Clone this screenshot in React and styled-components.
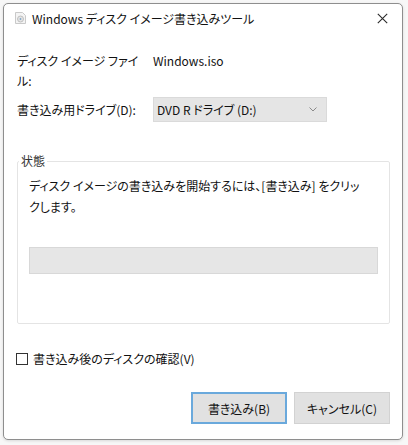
import React from "react";
import styled, { createGlobalStyle } from "styled-components";

const GlobalStyle = createGlobalStyle`
  html, body {
    margin: 0;
    padding: 0;
    background: #f7f7f7;
  }
  body {
    font-family: "Noto Sans CJK JP", "Noto Sans", sans-serif;
    font-size: 12px;
    color: #111;
    font-feature-settings: "palt";
  }
`;

const Screen = styled.div`
  width: 408px;
  height: 445px;
  box-sizing: border-box;
  padding: 3px 0 0 3px;
`;

const Window = styled.div`
  width: 400px;
  height: 437px;
  box-sizing: border-box;
  border: 1px solid #8e8e8e;
  border-radius: 5px;
  background: #fff;
  box-shadow: 0 1px 3px rgba(0, 0, 0, 0.12);
  display: flex;
  flex-direction: column;
`;

const TitleBar = styled.div`
  height: 28px;
  display: flex;
  align-items: center;
  padding: 0 12px 0 10px;
`;

const TitleText = styled.div`
  flex: 1;
  margin-left: 5px;
  font-size: 12px;
  color: #111;
`;

const CloseButton = styled.div`
  width: 14px;
  height: 14px;
  display: flex;
  align-items: center;
  justify-content: center;
  margin-right: 1px;
`;

const Content = styled.div`
  flex: 1;
  display: flex;
  flex-direction: column;
  padding: 0 12px 0 13px;
`;

const FieldRow = styled.div`
  display: flex;
  align-items: ${(p) => (p.$center ? "center" : "flex-start")};
  margin-top: ${(p) => p.$top}px;
  line-height: 20px;
`;

const Label = styled.div`
  width: 136px;
  flex-shrink: 0;
  span {
    display: block;
    max-width: ${(p) => p.$wrap || 136}px;
  }
`;

const Value = styled.div``;

const Select = styled.div`
  width: 174px;
  height: 25px;
  box-sizing: border-box;
  background: #e5e5e5;
  border: 1px solid #dadada;
  display: flex;
  align-items: center;
  justify-content: space-between;
  padding: 0 9px 0 3px;
`;

const Group = styled.fieldset`
  margin: 31px 0 0 0;
  padding: 7px 11px 0 11px;
  height: 171px;
  box-sizing: border-box;
  border: 1px solid #e4e4e4;
  border-radius: 2px;
  min-width: 0;
`;

const Legend = styled.legend`
  padding: 0 2px;
  margin-left: -10px;
  line-height: 16px;
  color: #333;
`;

const StatusText = styled.p`
  margin: 0;
  max-width: 334px;
  line-height: 20.5px;
`;

const Progress = styled.div`
  margin-top: 30px;
  height: 27px;
  box-sizing: border-box;
  background: #e6e6e6;
  border: 1px solid #d8d8d8;
`;

const CheckRow = styled.label`
  display: flex;
  align-items: center;
  margin-top: 25px;
  line-height: 20px;
  gap: 5px;
`;

const CheckBox = styled.span`
  width: 12px;
  height: 12px;
  box-sizing: border-box;
  border: 1px solid #333;
  background: #fff;
  margin-left: -1px;
`;

const ButtonBar = styled.div`
  display: flex;
  justify-content: flex-end;
  gap: 7px;
  margin-top: 23px;
`;

const Button = styled.button`
  width: 96px;
  height: 32px;
  box-sizing: border-box;
  background: #e1e1e1;
  border: ${(p) => (p.$default ? "2px solid #6aa9dc" : "1px solid #d2d2d2")};
  font: inherit;
  font-size: 12px;
  color: #111;
  padding: 0;
`;

const AppIcon = () => (
  <svg width="13" height="14" viewBox="0 0 13 14">
    <path d="M1.5 1.5h7l3 3v8h-10z" fill="#f4f4f4" stroke="#c9c9c9" />
    <circle cx="6.5" cy="8" r="3" fill="#e4e4e4" stroke="#b5b5b5" strokeWidth="0.8" />
    <circle cx="6.5" cy="8" r="0.9" fill="#7fa7c9" />
  </svg>
);

const CloseIcon = () => (
  <svg width="11" height="11" viewBox="0 0 11 11">
    <path d="M0.8 0.8l9.4 9.4M10.2 0.8l-9.4 9.4" stroke="#2a2a2a" strokeWidth="1.1" />
  </svg>
);

const Chevron = () => (
  <svg width="8" height="5" viewBox="0 0 8 5">
    <path d="M0.5 0.5l3.5 3.5 3.5-3.5" fill="none" stroke="#8a8a8a" strokeWidth="1" />
  </svg>
);

export default function App() {
  return (
    <>
      <GlobalStyle />
      <Screen>
        <Window>
          <TitleBar>
            <AppIcon />
            <TitleText>Windows ディスク イメージ書き込みツール</TitleText>
            <CloseButton>
              <CloseIcon />
            </CloseButton>
          </TitleBar>
          <Content>
            <FieldRow $top={19}>
              <Label $wrap={124}>
                <span>ディスク イメージ ファイル:</span>
              </Label>
              <Value>Windows.iso</Value>
            </FieldRow>
            <FieldRow $top={6} $center>
              <Label>
                <span>書き込み用ドライブ(D):</span>
              </Label>
              <Select>
                <span>DVD R ドライブ (D:)</span>
                <Chevron />
              </Select>
            </FieldRow>
            <Group>
              <Legend>状態</Legend>
              <StatusText>
                ディスク イメージの書き込みを開始するには、[書き込み] をクリックします。
              </StatusText>
              <Progress />
            </Group>
            <CheckRow>
              <CheckBox />
              書き込み後のディスクの確認(V)
            </CheckRow>
            <ButtonBar>
              <Button $default>書き込み(B)</Button>
              <Button>キャンセル(C)</Button>
            </ButtonBar>
          </Content>
        </Window>
      </Screen>
    </>
  );
}
